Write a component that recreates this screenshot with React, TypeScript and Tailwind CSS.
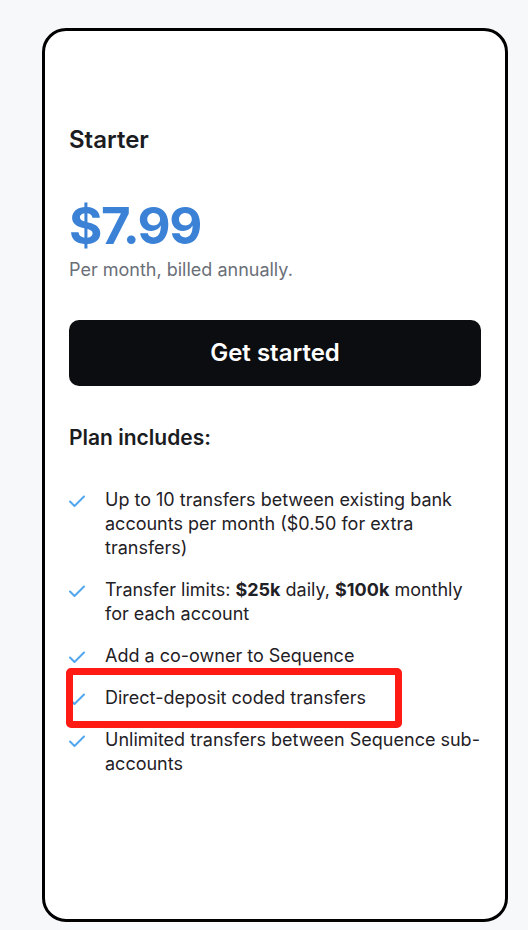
import React from 'react';

interface Feature {
  id: number;
  content: React.ReactNode;
}

const features: Feature[] = [
  { id: 1, content: 'Up to 10 transfers between existing bank accounts per month ($0.50 for extra transfers)' },
  {
    id: 2,
    content: (
      <>
        Transfer limits: <strong className="font-bold">$25k</strong> daily, <strong className="font-bold">$100k</strong> monthly for each account
      </>
    ),
  },
  { id: 3, content: 'Add a co-owner to Sequence' },
  { id: 4, content: 'Direct-deposit coded transfers' },
  { id: 5, content: 'Unlimited transfers between Sequence sub-accounts' },
];

function CheckIcon() {
  return (
    <svg viewBox="0 0 16 12" className="w-[16px] h-[12px] shrink-0 mt-[7px]" fill="none">
      <path d="M1 6.5 L5.5 11 L15 1.5" stroke="#52a6ee" strokeWidth="2" strokeLinecap="round" strokeLinejoin="round" />
    </svg>
  );
}

function App() {
  return (
    <div className="min-h-screen bg-[#f7f8fa] pt-[28px] pl-[42px]" style={{ fontFamily: 'Inter, "Noto Sans", sans-serif' }}>
      {/* Pricing card */}
      <div className="w-[466px] h-[894px] bg-white border-[3px] border-black rounded-[24px] px-6 pt-[94px]">
        <h2 className="text-[24px] leading-[30px] font-semibold text-[#1b1c1f]">Starter</h2>

        <p className="mt-[43px] text-[51px] leading-[56px] font-bold text-[#3b82d6] tracking-[-1.5px]">$7.99</p>
        <p className="mt-[4px] text-[18px] leading-[24px] text-[#6b6f78]">Per month, billed annually.</p>

        <button className="mt-[38px] w-full h-[66px] rounded-[10px] bg-[#0c0d10] text-white text-[24px] font-semibold">
          Get started
        </button>

        <h3 className="mt-[38px] text-[21px] leading-[28px] font-semibold text-[#1b1c1f]">Plan includes:</h3>

        <ul className="mt-[36px] flex flex-col gap-[18px]">
          {features.map((f) => (
            <li key={f.id} className="flex gap-[20px] text-[18px] leading-[24px] text-[#1f2126]">
              <CheckIcon />
              <span className="relative">
                {f.content}
                {f.id === 4 && (
                  <span className="absolute left-[-39px] top-[-18px] w-[336px] h-[60px] border-[7px] border-[#ff1a14] rounded-[5px] pointer-events-none" />
                )}
              </span>
            </li>
          ))}
        </ul>
      </div>
    </div>
  );
}

export default App;
